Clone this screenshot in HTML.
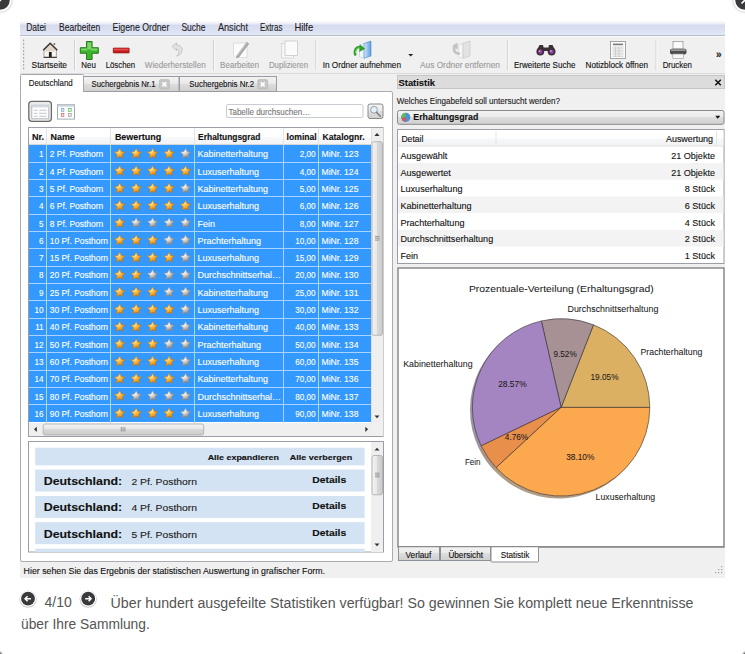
<!DOCTYPE html>
<html><head><meta charset="utf-8"><style>
html,body{margin:0;padding:0;background:#fff;width:745px;height:654px;overflow:hidden}
svg{display:block}
text{font-family:"Liberation Sans",sans-serif}
</style></head><body>
<svg width="745" height="654" viewBox="0 0 745 654" shape-rendering="auto">
<defs>
<linearGradient id="gMenu" x1="0" y1="0" x2="0" y2="1">
 <stop offset="0" stop-color="#fbfbfd"/><stop offset="0.14" stop-color="#f1f3f9"/><stop offset="0.3" stop-color="#d5dbee"/><stop offset="0.92" stop-color="#e1e6f5"/><stop offset="1" stop-color="#e1e6f5"/>
</linearGradient>
<linearGradient id="gTab" x1="0" y1="0" x2="0" y2="1">
 <stop offset="0" stop-color="#f3f3f3"/><stop offset="0.45" stop-color="#ebebeb"/><stop offset="0.5" stop-color="#dddddd"/><stop offset="1" stop-color="#cfcfcf"/>
</linearGradient>
<linearGradient id="gHdr" x1="0" y1="0" x2="0" y2="1">
 <stop offset="0" stop-color="#ffffff"/><stop offset="0.5" stop-color="#ffffff"/><stop offset="0.55" stop-color="#f7f8fa"/><stop offset="1" stop-color="#f1f2f4"/>
</linearGradient>
<linearGradient id="gBtn" x1="0" y1="0" x2="0" y2="1">
 <stop offset="0" stop-color="#f2f2f2"/><stop offset="0.5" stop-color="#ebebeb"/><stop offset="0.5" stop-color="#dddddd"/><stop offset="1" stop-color="#cfcfcf"/>
</linearGradient>
<linearGradient id="gThumbV" x1="0" y1="0" x2="1" y2="0">
 <stop offset="0" stop-color="#f3f3f3"/><stop offset="0.45" stop-color="#e8e8e8"/><stop offset="0.5" stop-color="#d9d9d9"/><stop offset="1" stop-color="#cbcbcb"/>
</linearGradient>
<linearGradient id="gThumbH" x1="0" y1="0" x2="0" y2="1">
 <stop offset="0" stop-color="#f3f3f3"/><stop offset="0.45" stop-color="#e8e8e8"/><stop offset="0.5" stop-color="#d9d9d9"/><stop offset="1" stop-color="#cbcbcb"/>
</linearGradient>
<linearGradient id="gGreen" x1="0" y1="0" x2="0" y2="1">
 <stop offset="0" stop-color="#9be07a"/><stop offset="0.5" stop-color="#3cae22"/><stop offset="1" stop-color="#1f7a12"/>
</linearGradient>
<radialGradient id="gStar" cx="0.35" cy="0.3" r="0.75">
 <stop offset="0" stop-color="#fff3c0"/><stop offset="0.35" stop-color="#fbc04a"/><stop offset="0.7" stop-color="#f59b12"/><stop offset="1" stop-color="#c8720c"/>
</radialGradient>
<radialGradient id="gStarG" cx="0.35" cy="0.3" r="0.75">
 <stop offset="0" stop-color="#ffffff"/><stop offset="0.35" stop-color="#dcdad8"/><stop offset="0.7" stop-color="#aaa39c"/><stop offset="1" stop-color="#857c74"/>
</radialGradient>
<linearGradient id="gBlue" x1="0" y1="0" x2="1" y2="0"><stop offset="0" stop-color="#d7e8f8"/><stop offset="1" stop-color="#5a9de2"/></linearGradient>
<filter id="blur1" x="-50%" y="-50%" width="200%" height="200%"><feGaussianBlur stdDeviation="1.2"/></filter>
<filter id="blur05" x="-50%" y="-50%" width="200%" height="200%"><feGaussianBlur stdDeviation="0.5"/></filter>
<symbol id="star" viewBox="-6 -6 12 12" overflow="visible"><path d="M0.00,-5.60 L1.62,-2.22 L5.33,-1.73 L2.62,0.85 L3.29,4.53 L0.00,2.75 L-3.29,4.53 L-2.62,0.85 L-5.33,-1.73 L-1.62,-2.22 Z" stroke-linejoin="round"/></symbol>
</defs>
<circle cx="0" cy="0" r="12.5" fill="#000" opacity="0.18" filter="url(#blur1)"/>
<circle cx="0" cy="0" r="11.5" fill="#fff"/>
<circle cx="0" cy="0" r="9.8" fill="#3a3a3c"/>
<path d="M-1,1.5 L1.5,-1" stroke="#fff" stroke-width="1.6"/>
<circle cx="745" cy="0" r="12.5" fill="#000" opacity="0.18" filter="url(#blur1)"/>
<circle cx="745" cy="0" r="11.5" fill="#fff"/>
<circle cx="745" cy="0" r="9.8" fill="#3a3a3c"/>
<path d="M741.5,3.5 L745,0" stroke="#fff" stroke-width="1.6"/>
<circle cx="-5" cy="659" r="8" fill="#000" filter="url(#blur1)"/>
<circle cx="750" cy="659" r="8" fill="#000" filter="url(#blur1)"/>
<rect x="20" y="21" width="705" height="557" fill="#f0f0f0" />
<rect x="20" y="21" width="705" height="14.5" fill="url(#gMenu)" />
<line x1="20" y1="35.5" x2="725" y2="35.5" stroke="#b9bdc9" stroke-width="1" />
<line x1="20" y1="36.5" x2="725" y2="36.5" stroke="#fbfbfb" stroke-width="1" />
<text x="26.2" y="30.9" font-family="Liberation Sans" font-size="10.4" fill="#1e1e1e" stroke="#1e1e1e" stroke-width="0.12" textLength="19.80" lengthAdjust="spacingAndGlyphs" >Datei</text>
<text x="59.1" y="30.9" font-family="Liberation Sans" font-size="10.4" fill="#1e1e1e" stroke="#1e1e1e" stroke-width="0.12" textLength="41.00" lengthAdjust="spacingAndGlyphs" >Bearbeiten</text>
<text x="112.6" y="30.9" font-family="Liberation Sans" font-size="10.4" fill="#1e1e1e" stroke="#1e1e1e" stroke-width="0.12" textLength="56.80" lengthAdjust="spacingAndGlyphs" >Eigene Ordner</text>
<text x="181.4" y="30.9" font-family="Liberation Sans" font-size="10.4" fill="#1e1e1e" stroke="#1e1e1e" stroke-width="0.12" textLength="24.00" lengthAdjust="spacingAndGlyphs" >Suche</text>
<text x="217.9" y="30.9" font-family="Liberation Sans" font-size="10.4" fill="#1e1e1e" stroke="#1e1e1e" stroke-width="0.12" textLength="30.10" lengthAdjust="spacingAndGlyphs" >Ansicht</text>
<text x="259.9" y="30.9" font-family="Liberation Sans" font-size="10.4" fill="#1e1e1e" stroke="#1e1e1e" stroke-width="0.12" textLength="22.50" lengthAdjust="spacingAndGlyphs" >Extras</text>
<text x="294.4" y="30.9" font-family="Liberation Sans" font-size="10.4" fill="#1e1e1e" stroke="#1e1e1e" stroke-width="0.12" textLength="18.80" lengthAdjust="spacingAndGlyphs" >Hilfe</text>
<line x1="20" y1="73.5" x2="725" y2="73.5" stroke="#dcdcdc" stroke-width="1" />
<rect x="23" y="39.5" width="1.2" height="1.8" fill="#a8a8a8" />
<rect x="23" y="43.0" width="1.2" height="1.8" fill="#a8a8a8" />
<rect x="23" y="46.5" width="1.2" height="1.8" fill="#a8a8a8" />
<rect x="23" y="50.0" width="1.2" height="1.8" fill="#a8a8a8" />
<rect x="23" y="53.5" width="1.2" height="1.8" fill="#a8a8a8" />
<rect x="23" y="57.0" width="1.2" height="1.8" fill="#a8a8a8" />
<rect x="23" y="60.5" width="1.2" height="1.8" fill="#a8a8a8" />
<rect x="23" y="64.0" width="1.2" height="1.8" fill="#a8a8a8" />
<rect x="23" y="67.5" width="1.2" height="1.8" fill="#a8a8a8" />
<line x1="74.5" y1="39.5" x2="74.5" y2="70.5" stroke="#d0d0d0" stroke-width="1" />
<line x1="75.5" y1="39.5" x2="75.5" y2="70.5" stroke="#fafafa" stroke-width="1" />
<line x1="213.5" y1="39.5" x2="213.5" y2="70.5" stroke="#d0d0d0" stroke-width="1" />
<line x1="214.5" y1="39.5" x2="214.5" y2="70.5" stroke="#fafafa" stroke-width="1" />
<line x1="315.9" y1="39.5" x2="315.9" y2="70.5" stroke="#d0d0d0" stroke-width="1" />
<line x1="316.9" y1="39.5" x2="316.9" y2="70.5" stroke="#fafafa" stroke-width="1" />
<line x1="507.7" y1="39.5" x2="507.7" y2="70.5" stroke="#d0d0d0" stroke-width="1" />
<line x1="508.7" y1="39.5" x2="508.7" y2="70.5" stroke="#fafafa" stroke-width="1" />
<line x1="656" y1="39.5" x2="656" y2="70.5" stroke="#d0d0d0" stroke-width="1" />
<line x1="657" y1="39.5" x2="657" y2="70.5" stroke="#fafafa" stroke-width="1" />
<text x="31.6" y="67.6" font-family="Liberation Sans" font-size="8.6" fill="#111" stroke="#111" stroke-width="0.12" textLength="35.40" lengthAdjust="spacingAndGlyphs" >Startseite</text>
<text x="81.3" y="67.6" font-family="Liberation Sans" font-size="8.6" fill="#111" stroke="#111" stroke-width="0.12" textLength="14.50" lengthAdjust="spacingAndGlyphs" >Neu</text>
<text x="105.7" y="67.6" font-family="Liberation Sans" font-size="8.6" fill="#111" stroke="#111" stroke-width="0.12" textLength="29.50" lengthAdjust="spacingAndGlyphs" >Löschen</text>
<text x="144.8" y="67.6" font-family="Liberation Sans" font-size="8.6" fill="#9a9a9a" stroke="#9a9a9a" stroke-width="0.12" textLength="60.90" lengthAdjust="spacingAndGlyphs" >Wiederherstellen</text>
<text x="220" y="67.6" font-family="Liberation Sans" font-size="8.6" fill="#9a9a9a" stroke="#9a9a9a" stroke-width="0.12" textLength="39.10" lengthAdjust="spacingAndGlyphs" >Bearbeiten</text>
<text x="268.9" y="67.6" font-family="Liberation Sans" font-size="8.6" fill="#9a9a9a" stroke="#9a9a9a" stroke-width="0.12" textLength="39.10" lengthAdjust="spacingAndGlyphs" >Duplizieren</text>
<text x="322.7" y="67.6" font-family="Liberation Sans" font-size="8.6" fill="#111" stroke="#111" stroke-width="0.12" textLength="78.30" lengthAdjust="spacingAndGlyphs" >In Ordner aufnehmen</text>
<text x="420" y="67.6" font-family="Liberation Sans" font-size="8.6" fill="#9a9a9a" stroke="#9a9a9a" stroke-width="0.12" textLength="80.00" lengthAdjust="spacingAndGlyphs" >Aus Ordner entfernen</text>
<text x="513.9" y="67.6" font-family="Liberation Sans" font-size="8.6" fill="#111" stroke="#111" stroke-width="0.12" textLength="61.70" lengthAdjust="spacingAndGlyphs" >Erweiterte Suche</text>
<text x="585.5" y="67.6" font-family="Liberation Sans" font-size="8.6" fill="#111" stroke="#111" stroke-width="0.12" textLength="62.50" lengthAdjust="spacingAndGlyphs" >Notizblock öffnen</text>
<text x="662.7" y="67.6" font-family="Liberation Sans" font-size="8.6" fill="#111" stroke="#111" stroke-width="0.12" textLength="29.30" lengthAdjust="spacingAndGlyphs" >Drucken</text>
<text x="716" y="58" font-family="Liberation Sans" font-size="10" fill="#222" stroke="#222" stroke-width="0.12" font-weight="bold" >»</text>
<g><path d="M44,49.3 L44,57.2 L56.4,57.2 L56.4,49.3 L50.2,44 Z" fill="#f8f6f2" stroke="#8c857c" stroke-width="0.7"/><path d="M45,49.2 L50.2,44.8 L55.4,49.2 L55.4,51.5 L45,51.5 Z" fill="#d8cdc0" opacity="0.8"/><path d="M43.2,50.3 L50.2,43.2 L57.3,50.3" fill="none" stroke="#3a3531" stroke-width="1.5" stroke-linejoin="miter"/><rect x="48.9" y="52" width="2.8" height="5.2" fill="#1f1f1f"/><line x1="43.6" y1="57.4" x2="56.8" y2="57.4" stroke="#3f3a35" stroke-width="1.1"/><rect x="53.6" y="43.2" width="1.6" height="1.8" fill="#6a6a6a"/></g>
<path d="M86.5,41.5 h5.6 v6.2 h6.2 v5.6 h-6.2 v6.2 h-5.6 v-6.2 h-6.2 v-5.6 h6.2 Z" fill="#3cb52a" stroke="#1d6e14" stroke-width="0.9" stroke-linejoin="round"/>
<path d="M87.3,42.4 h4 v6 h6.1 v2 h-6.1 v-1 h-4 Z M81.2,48.5 h6 v2 h-6 Z" fill="#8fe07a" opacity="0.75"/>
<rect x="113.2" y="48" width="16" height="5" rx="0.6" fill="#c41c1c" stroke="#8e1010" stroke-width="0.6"/>
<rect x="114" y="48.6" width="14.4" height="1.8" fill="#ee5b5b" opacity="0.8"/>
<path d="M172,46.5 L176.5,42.8 L176.5,45 C181,45 183,48 182,51.5 C181.2,54 179,55.5 176.5,56 C179,54.2 179.5,51.5 178,49.8 C177.3,49 176.8,48.9 176.5,48.9 L176.5,50.5 Z" fill="#e2e2e2" stroke="#b8b8b8" stroke-width="0.7"/>
<path d="M233.5,43 h13.5 v14.5 h-11 l-2.5,-2.5 Z" fill="#fbfbfb" stroke="#cfcfcf" stroke-width="0.6"/>
<path d="M237,55.5 L246.8,42.2 L248.8,43.8 L239,57 L236.4,57.8 Z" fill="#a8a8a8" stroke="#888" stroke-width="0.4"/>
<path d="M237.6,55.6 L247.2,42.8" stroke="#d8d8d8" stroke-width="0.5"/>
<rect x="281.5" y="43.5" width="12" height="14.5" fill="#f6f6f6" stroke="#cfcfcf" stroke-width="0.7"/>
<rect x="285" y="41" width="12.5" height="14.5" fill="#fbfbfb" stroke="#c4c4c4" stroke-width="0.7"/>
<path d="M359.5,45 L364,43.5 L364,58.2 L359.5,56.8 Z" fill="#f4f8fc" stroke="#a9c4de" stroke-width="0.5"/>
<path d="M364,43.5 L371,41 L371,56 L364,58.2 Z" fill="url(#gBlue)" stroke="#4b86c8" stroke-width="0.6"/>
<path d="M355.2,54.5 C354,49.5 357,46.2 361,47.2" fill="none" stroke="#2f9e2a" stroke-width="2.6" stroke-linecap="round"/>
<path d="M359.8,44.2 L365.2,48.8 L359.2,52 Z" fill="#2f9e2a"/>
<path d="M355.6,52.5 C355.2,49.8 356.8,48 359,47.8" fill="none" stroke="#8fdc7c" stroke-width="0.9" stroke-linecap="round"/>
<path d="M408.2,54 L413.2,54 L410.7,56.6 Z" fill="#222"/>
<path d="M458.5,45 L463,43.5 L463,58.2 L458.5,56.8 Z" fill="#f6f6f6" stroke="#d0d0d0" stroke-width="0.5"/>
<path d="M463,43.5 L470,41 L470,56 L463,58.2 Z" fill="#e2e2e2" stroke="#c2c2c2" stroke-width="0.6"/>
<path d="M455.5,45 C452.5,49 454,53.5 459,53.5" fill="none" stroke="#c4c4c4" stroke-width="2.6" stroke-linecap="round"/>
<path d="M452,46.5 L457.5,42.5 L457.8,49.5 Z" fill="#c4c4c4"/>
<g fill="#3a3036"><circle cx="540.3" cy="51.6" r="3.9"/><circle cx="551.6" cy="51.6" r="3.9"/><path d="M537,50 L539.5,45 L543,45 L544.2,50 Z"/><path d="M547.7,50 L549,45 L552.5,45 L555,50 Z"/><rect x="543" y="47.5" width="5.5" height="3.5"/></g>
<circle cx="540.3" cy="51.8" r="2.2" fill="#8e3aa0"/><circle cx="551.6" cy="51.8" r="2.2" fill="#8e3aa0"/>
<circle cx="539.6" cy="51.1" r="0.9" fill="#e0a6ee"/><circle cx="550.9" cy="51.1" r="0.9" fill="#e0a6ee"/>
<rect x="610.5" y="41.5" width="15" height="17" fill="#fbfbfb" stroke="#8f8f8f" stroke-width="0.8"/>
<rect x="613" y="43.6" width="10" height="1.6" fill="#7a7a7a"/>
<g stroke="#bdbdbd" stroke-width="0.55"><line x1="612.5" y1="47.20" x2="623.5" y2="47.20"/><line x1="612.5" y1="48.75" x2="623.5" y2="48.75"/><line x1="612.5" y1="50.30" x2="623.5" y2="50.30"/><line x1="612.5" y1="51.85" x2="623.5" y2="51.85"/><line x1="612.5" y1="53.40" x2="623.5" y2="53.40"/><line x1="612.5" y1="54.95" x2="623.5" y2="54.95"/><line x1="612.5" y1="56.50" x2="623.5" y2="56.50"/><line x1="615.5" y1="46.5" x2="615.5" y2="57"/><line x1="619" y1="46.5" x2="619" y2="57"/></g>
<rect x="673" y="41.5" width="10" height="7.5" fill="#fafafa" stroke="#8f8f8f" stroke-width="0.7"/>
<rect x="670" y="48.8" width="16.5" height="5.6" rx="1.8" fill="#4e4e4e"/>
<rect x="670.8" y="49.2" width="15" height="1.8" rx="0.8" fill="#9a9a9a"/>
<rect x="672.8" y="54" width="10.5" height="4.6" fill="#f6f6f6" stroke="#9a9a9a" stroke-width="0.6"/>
<rect x="20.5" y="91.5" width="372" height="470" fill="#ffffff" stroke="#a9acb2" stroke-width="1" rx="1.5" />
<rect x="83.5" y="76.5" width="95.5" height="15" fill="url(#gTab)" stroke="#9a9ea4" stroke-width="1" />
<rect x="179.5" y="76.5" width="97" height="15" fill="url(#gTab)" stroke="#9a9ea4" stroke-width="1" />
<rect x="20.5" y="74.5" width="63" height="17.5" fill="#ffffff" stroke="#a3a7ad" stroke-width="1" rx="1" />
<rect x="21" y="90" width="62" height="3" fill="#ffffff" />
<text x="28.7" y="86" font-family="Liberation Sans" font-size="9.2" fill="#111" stroke="#111" stroke-width="0.12" textLength="44.10" lengthAdjust="spacingAndGlyphs" >Deutschland</text>
<text x="91.5" y="87" font-family="Liberation Sans" font-size="9.2" fill="#111" stroke="#111" stroke-width="0.12" textLength="64.00" lengthAdjust="spacingAndGlyphs" >Suchergebnis Nr.1</text>
<text x="189.3" y="87" font-family="Liberation Sans" font-size="9.2" fill="#111" stroke="#111" stroke-width="0.12" textLength="64.90" lengthAdjust="spacingAndGlyphs" >Suchergebnis Nr.2</text>
<rect x="159.5" y="79.6" width="9.8" height="9.4" fill="#c6c6c6" stroke="#b3b3b3" stroke-width="0.6" rx="1.2" />
<path d="M162.4,82.4 L166.4,86.4 M166.4,82.4 L162.4,86.4" stroke="#fff" stroke-width="1.6"/>
<rect x="257.8" y="79.6" width="9.8" height="9.4" fill="#c6c6c6" stroke="#b3b3b3" stroke-width="0.6" rx="1.2" />
<path d="M260.7,82.4 L264.7,86.4 M264.7,82.4 L260.7,86.4" stroke="#fff" stroke-width="1.6"/>
<rect x="28.8" y="101.3" width="22.6" height="20" fill="#ececec" stroke="#6c6c6c" stroke-width="1.3" rx="3" />
<rect x="31.8" y="105.2" width="17" height="13.6" fill="#fdfdfd" stroke="#a3acb8" stroke-width="0.8" />
<rect x="31.8" y="105.2" width="17" height="2.2" fill="#d3d9e0" />
<g stroke="#bcc2ca" stroke-width="0.9"><line x1="34" y1="110.3" x2="37.4" y2="110.3"/><line x1="39.2" y1="110.3" x2="46.6" y2="110.3"/><line x1="34" y1="113.3" x2="37.4" y2="113.3"/><line x1="39.2" y1="113.3" x2="46.6" y2="113.3"/><line x1="34" y1="116.3" x2="37.4" y2="116.3"/><line x1="39.2" y1="116.3" x2="46.6" y2="116.3"/></g>
<rect x="57.5" y="104.5" width="17" height="14.6" fill="#fdfdfd" stroke="#9aa3ae" stroke-width="0.9" />
<rect x="57.5" y="104.5" width="17" height="2.2" fill="#ccd3db" />
<rect x="61.3" y="108.3" width="2.6" height="3.2" fill="#dfe9f6" stroke="#6e98cf" stroke-width="0.6"/><rect x="68.6" y="108.3" width="2.6" height="3.2" fill="#e2f3de" stroke="#4fae4f" stroke-width="0.6"/><rect x="61.3" y="113.3" width="2.6" height="3.2" fill="#f6e0e0" stroke="#d05a5a" stroke-width="0.6"/><rect x="68.6" y="113.3" width="2.6" height="3.2" fill="#eeeeee" stroke="#8a8a8a" stroke-width="0.6"/>
<rect x="226.5" y="104.5" width="136.5" height="13" fill="#ffffff" stroke="#c9ccd2" stroke-width="1" rx="1.5" />
<text x="228.4" y="114.6" font-family="Liberation Sans" font-size="9" fill="#777" stroke="#777" stroke-width="0.12" textLength="81.90" lengthAdjust="spacingAndGlyphs" >Tabelle durchsuchen…</text>
<rect x="368" y="104" width="15" height="14.5" fill="url(#gBtn)" stroke="#8a8a8a" stroke-width="1" rx="2" />
<circle cx="374" cy="109.8" r="3.4" fill="#e3f0fb" stroke="#8a9aaa" stroke-width="0.9"/><line x1="376.4" y1="112.3" x2="380.3" y2="116.2" stroke="#7d7d7d" stroke-width="1.4" stroke-linecap="round"/>
<rect x="28.5" y="127.5" width="354.5" height="309" fill="#ffffff" stroke="#9a9ea5" stroke-width="1" />
<rect x="29" y="128" width="342" height="17" fill="url(#gHdr)" />
<line x1="29" y1="144.5" x2="371" y2="144.5" stroke="#d5d5d5" stroke-width="1" />
<line x1="46.5" y1="128" x2="46.5" y2="144.5" stroke="#e3e3e3" stroke-width="1" />
<line x1="110.5" y1="128" x2="110.5" y2="144.5" stroke="#e3e3e3" stroke-width="1" />
<line x1="194.5" y1="128" x2="194.5" y2="144.5" stroke="#e3e3e3" stroke-width="1" />
<line x1="283.5" y1="128" x2="283.5" y2="144.5" stroke="#e3e3e3" stroke-width="1" />
<line x1="318.5" y1="128" x2="318.5" y2="144.5" stroke="#e3e3e3" stroke-width="1" />
<text x="32" y="139.9" font-family="Liberation Sans" font-size="9.2" fill="#111" stroke="#111" stroke-width="0.12" font-weight="bold" textLength="12.10" lengthAdjust="spacingAndGlyphs" >Nr.</text>
<text x="50.6" y="139.9" font-family="Liberation Sans" font-size="9.2" fill="#111" stroke="#111" stroke-width="0.12" font-weight="bold" textLength="24.20" lengthAdjust="spacingAndGlyphs" >Name</text>
<text x="114.9" y="139.9" font-family="Liberation Sans" font-size="9.2" fill="#111" stroke="#111" stroke-width="0.12" font-weight="bold" textLength="46.40" lengthAdjust="spacingAndGlyphs" >Bewertung</text>
<text x="198.1" y="139.9" font-family="Liberation Sans" font-size="9.2" fill="#111" stroke="#111" stroke-width="0.12" font-weight="bold" textLength="62.30" lengthAdjust="spacingAndGlyphs" >Erhaltungsgrad</text>
<text x="286.6" y="139.9" font-family="Liberation Sans" font-size="9.2" fill="#111" stroke="#111" stroke-width="0.12" font-weight="bold" textLength="30.10" lengthAdjust="spacingAndGlyphs" >lominal</text>
<text x="322.5" y="139.9" font-family="Liberation Sans" font-size="9.2" fill="#111" stroke="#111" stroke-width="0.12" font-weight="bold" textLength="42.10" lengthAdjust="spacingAndGlyphs" >Katalognr.</text>
<rect x="29" y="145" width="342" height="276.96" fill="#3399ff" />
<line x1="29" y1="162.5" x2="371" y2="162.5" stroke="#a8d3fd" stroke-width="1" />
<line x1="29" y1="179.5" x2="371" y2="179.5" stroke="#a8d3fd" stroke-width="1" />
<line x1="29" y1="196.5" x2="371" y2="196.5" stroke="#a8d3fd" stroke-width="1" />
<line x1="29" y1="214.5" x2="371" y2="214.5" stroke="#a8d3fd" stroke-width="1" />
<line x1="29" y1="231.5" x2="371" y2="231.5" stroke="#a8d3fd" stroke-width="1" />
<line x1="29" y1="248.5" x2="371" y2="248.5" stroke="#a8d3fd" stroke-width="1" />
<line x1="29" y1="266.5" x2="371" y2="266.5" stroke="#a8d3fd" stroke-width="1" />
<line x1="29" y1="283.5" x2="371" y2="283.5" stroke="#a8d3fd" stroke-width="1" />
<line x1="29" y1="300.5" x2="371" y2="300.5" stroke="#a8d3fd" stroke-width="1" />
<line x1="29" y1="318.5" x2="371" y2="318.5" stroke="#a8d3fd" stroke-width="1" />
<line x1="29" y1="335.5" x2="371" y2="335.5" stroke="#a8d3fd" stroke-width="1" />
<line x1="29" y1="352.5" x2="371" y2="352.5" stroke="#a8d3fd" stroke-width="1" />
<line x1="29" y1="370.5" x2="371" y2="370.5" stroke="#a8d3fd" stroke-width="1" />
<line x1="29" y1="387.5" x2="371" y2="387.5" stroke="#a8d3fd" stroke-width="1" />
<line x1="29" y1="404.5" x2="371" y2="404.5" stroke="#a8d3fd" stroke-width="1" />
<line x1="46.5" y1="145" x2="46.5" y2="423" stroke="#a8d3fd" stroke-width="1" />
<line x1="110.5" y1="145" x2="110.5" y2="423" stroke="#a8d3fd" stroke-width="1" />
<line x1="194.5" y1="145" x2="194.5" y2="423" stroke="#a8d3fd" stroke-width="1" />
<line x1="283.5" y1="145" x2="283.5" y2="423" stroke="#a8d3fd" stroke-width="1" />
<line x1="318.5" y1="145" x2="318.5" y2="423" stroke="#a8d3fd" stroke-width="1" />
<text x="43.6" y="157.3" font-family="Liberation Sans" font-size="9.5" fill="#fff" stroke="#fff" stroke-width="0.12" text-anchor="end" textLength="4.51" lengthAdjust="spacingAndGlyphs" >1</text>
<text x="49.7" y="157.3" font-family="Liberation Sans" font-size="9.5" fill="#fff" stroke="#fff" stroke-width="0.12" textLength="53.58" lengthAdjust="spacingAndGlyphs" >2 Pf. Posthorn</text>
<text x="197.6" y="157.3" font-family="Liberation Sans" font-size="9.5" fill="#fff" stroke="#fff" stroke-width="0.12" textLength="70.53" lengthAdjust="spacingAndGlyphs" >Kabinetterhaltung</text>
<text x="315.6" y="157.3" font-family="Liberation Sans" font-size="9.5" fill="#fff" stroke="#fff" stroke-width="0.12" text-anchor="end" textLength="15.77" lengthAdjust="spacingAndGlyphs" >2,00</text>
<text x="321.5" y="157.3" font-family="Liberation Sans" font-size="9.5" fill="#fff" stroke="#fff" stroke-width="0.12" textLength="36.95" lengthAdjust="spacingAndGlyphs" >MiNr. 123</text>
<use href="#star" x="113.70" y="147.75" width="12" height="12" fill="url(#gStar)" stroke="#b8741a" stroke-width="0.5"/>
<use href="#star" x="130.17" y="147.75" width="12" height="12" fill="url(#gStar)" stroke="#b8741a" stroke-width="0.5"/>
<use href="#star" x="146.64" y="147.75" width="12" height="12" fill="url(#gStar)" stroke="#b8741a" stroke-width="0.5"/>
<use href="#star" x="163.11" y="147.75" width="12" height="12" fill="url(#gStar)" stroke="#b8741a" stroke-width="0.5"/>
<use href="#star" x="179.58" y="147.75" width="12" height="12" fill="url(#gStarG)" stroke="#8a8a8a" stroke-width="0.5"/>
<text x="43.6" y="174.61" font-family="Liberation Sans" font-size="9.5" fill="#fff" stroke="#fff" stroke-width="0.12" text-anchor="end" textLength="4.51" lengthAdjust="spacingAndGlyphs" >2</text>
<text x="49.7" y="174.61" font-family="Liberation Sans" font-size="9.5" fill="#fff" stroke="#fff" stroke-width="0.12" textLength="53.58" lengthAdjust="spacingAndGlyphs" >4 Pf. Posthorn</text>
<text x="197.6" y="174.61" font-family="Liberation Sans" font-size="9.5" fill="#fff" stroke="#fff" stroke-width="0.12" textLength="61.52" lengthAdjust="spacingAndGlyphs" >Luxuserhaltung</text>
<text x="315.6" y="174.61" font-family="Liberation Sans" font-size="9.5" fill="#fff" stroke="#fff" stroke-width="0.12" text-anchor="end" textLength="15.77" lengthAdjust="spacingAndGlyphs" >4,00</text>
<text x="321.5" y="174.61" font-family="Liberation Sans" font-size="9.5" fill="#fff" stroke="#fff" stroke-width="0.12" textLength="36.95" lengthAdjust="spacingAndGlyphs" >MiNr. 124</text>
<use href="#star" x="113.70" y="165.06" width="12" height="12" fill="url(#gStar)" stroke="#b8741a" stroke-width="0.5"/>
<use href="#star" x="130.17" y="165.06" width="12" height="12" fill="url(#gStar)" stroke="#b8741a" stroke-width="0.5"/>
<use href="#star" x="146.64" y="165.06" width="12" height="12" fill="url(#gStar)" stroke="#b8741a" stroke-width="0.5"/>
<use href="#star" x="163.11" y="165.06" width="12" height="12" fill="url(#gStar)" stroke="#b8741a" stroke-width="0.5"/>
<use href="#star" x="179.58" y="165.06" width="12" height="12" fill="url(#gStar)" stroke="#b8741a" stroke-width="0.5"/>
<text x="43.6" y="191.92000000000002" font-family="Liberation Sans" font-size="9.5" fill="#fff" stroke="#fff" stroke-width="0.12" text-anchor="end" textLength="4.51" lengthAdjust="spacingAndGlyphs" >3</text>
<text x="49.7" y="191.92000000000002" font-family="Liberation Sans" font-size="9.5" fill="#fff" stroke="#fff" stroke-width="0.12" textLength="53.58" lengthAdjust="spacingAndGlyphs" >5 Pf. Posthorn</text>
<text x="197.6" y="191.92000000000002" font-family="Liberation Sans" font-size="9.5" fill="#fff" stroke="#fff" stroke-width="0.12" textLength="70.53" lengthAdjust="spacingAndGlyphs" >Kabinetterhaltung</text>
<text x="315.6" y="191.92000000000002" font-family="Liberation Sans" font-size="9.5" fill="#fff" stroke="#fff" stroke-width="0.12" text-anchor="end" textLength="15.77" lengthAdjust="spacingAndGlyphs" >5,00</text>
<text x="321.5" y="191.92000000000002" font-family="Liberation Sans" font-size="9.5" fill="#fff" stroke="#fff" stroke-width="0.12" textLength="36.95" lengthAdjust="spacingAndGlyphs" >MiNr. 125</text>
<use href="#star" x="113.70" y="182.38" width="12" height="12" fill="url(#gStar)" stroke="#b8741a" stroke-width="0.5"/>
<use href="#star" x="130.17" y="182.38" width="12" height="12" fill="url(#gStar)" stroke="#b8741a" stroke-width="0.5"/>
<use href="#star" x="146.64" y="182.38" width="12" height="12" fill="url(#gStar)" stroke="#b8741a" stroke-width="0.5"/>
<use href="#star" x="163.11" y="182.38" width="12" height="12" fill="url(#gStar)" stroke="#b8741a" stroke-width="0.5"/>
<use href="#star" x="179.58" y="182.38" width="12" height="12" fill="url(#gStarG)" stroke="#8a8a8a" stroke-width="0.5"/>
<text x="43.6" y="209.23000000000002" font-family="Liberation Sans" font-size="9.5" fill="#fff" stroke="#fff" stroke-width="0.12" text-anchor="end" textLength="4.51" lengthAdjust="spacingAndGlyphs" >4</text>
<text x="49.7" y="209.23000000000002" font-family="Liberation Sans" font-size="9.5" fill="#fff" stroke="#fff" stroke-width="0.12" textLength="53.58" lengthAdjust="spacingAndGlyphs" >6 Pf. Posthorn</text>
<text x="197.6" y="209.23000000000002" font-family="Liberation Sans" font-size="9.5" fill="#fff" stroke="#fff" stroke-width="0.12" textLength="61.52" lengthAdjust="spacingAndGlyphs" >Luxuserhaltung</text>
<text x="315.6" y="209.23000000000002" font-family="Liberation Sans" font-size="9.5" fill="#fff" stroke="#fff" stroke-width="0.12" text-anchor="end" textLength="15.77" lengthAdjust="spacingAndGlyphs" >6,00</text>
<text x="321.5" y="209.23000000000002" font-family="Liberation Sans" font-size="9.5" fill="#fff" stroke="#fff" stroke-width="0.12" textLength="36.95" lengthAdjust="spacingAndGlyphs" >MiNr. 126</text>
<use href="#star" x="113.70" y="199.69" width="12" height="12" fill="url(#gStar)" stroke="#b8741a" stroke-width="0.5"/>
<use href="#star" x="130.17" y="199.69" width="12" height="12" fill="url(#gStar)" stroke="#b8741a" stroke-width="0.5"/>
<use href="#star" x="146.64" y="199.69" width="12" height="12" fill="url(#gStar)" stroke="#b8741a" stroke-width="0.5"/>
<use href="#star" x="163.11" y="199.69" width="12" height="12" fill="url(#gStar)" stroke="#b8741a" stroke-width="0.5"/>
<use href="#star" x="179.58" y="199.69" width="12" height="12" fill="url(#gStar)" stroke="#b8741a" stroke-width="0.5"/>
<text x="43.6" y="226.54000000000002" font-family="Liberation Sans" font-size="9.5" fill="#fff" stroke="#fff" stroke-width="0.12" text-anchor="end" textLength="4.51" lengthAdjust="spacingAndGlyphs" >5</text>
<text x="49.7" y="226.54000000000002" font-family="Liberation Sans" font-size="9.5" fill="#fff" stroke="#fff" stroke-width="0.12" textLength="53.58" lengthAdjust="spacingAndGlyphs" >8 Pf. Posthorn</text>
<text x="197.6" y="226.54000000000002" font-family="Liberation Sans" font-size="9.5" fill="#fff" stroke="#fff" stroke-width="0.12" textLength="17.50" lengthAdjust="spacingAndGlyphs" >Fein</text>
<text x="315.6" y="226.54000000000002" font-family="Liberation Sans" font-size="9.5" fill="#fff" stroke="#fff" stroke-width="0.12" text-anchor="end" textLength="15.77" lengthAdjust="spacingAndGlyphs" >8,00</text>
<text x="321.5" y="226.54000000000002" font-family="Liberation Sans" font-size="9.5" fill="#fff" stroke="#fff" stroke-width="0.12" textLength="36.95" lengthAdjust="spacingAndGlyphs" >MiNr. 127</text>
<use href="#star" x="113.70" y="217.00" width="12" height="12" fill="url(#gStar)" stroke="#b8741a" stroke-width="0.5"/>
<use href="#star" x="130.17" y="217.00" width="12" height="12" fill="url(#gStarG)" stroke="#8a8a8a" stroke-width="0.5"/>
<use href="#star" x="146.64" y="217.00" width="12" height="12" fill="url(#gStarG)" stroke="#8a8a8a" stroke-width="0.5"/>
<use href="#star" x="163.11" y="217.00" width="12" height="12" fill="url(#gStarG)" stroke="#8a8a8a" stroke-width="0.5"/>
<use href="#star" x="179.58" y="217.00" width="12" height="12" fill="url(#gStarG)" stroke="#8a8a8a" stroke-width="0.5"/>
<text x="43.6" y="243.85000000000002" font-family="Liberation Sans" font-size="9.5" fill="#fff" stroke="#fff" stroke-width="0.12" text-anchor="end" textLength="4.51" lengthAdjust="spacingAndGlyphs" >6</text>
<text x="49.7" y="243.85000000000002" font-family="Liberation Sans" font-size="9.5" fill="#fff" stroke="#fff" stroke-width="0.12" textLength="58.28" lengthAdjust="spacingAndGlyphs" >10 Pf. Posthorn</text>
<text x="197.6" y="243.85000000000002" font-family="Liberation Sans" font-size="9.5" fill="#fff" stroke="#fff" stroke-width="0.12" textLength="63.52" lengthAdjust="spacingAndGlyphs" >Prachterhaltung</text>
<text x="315.6" y="243.85000000000002" font-family="Liberation Sans" font-size="9.5" fill="#fff" stroke="#fff" stroke-width="0.12" text-anchor="end" textLength="20.28" lengthAdjust="spacingAndGlyphs" >10,00</text>
<text x="321.5" y="243.85000000000002" font-family="Liberation Sans" font-size="9.5" fill="#fff" stroke="#fff" stroke-width="0.12" textLength="36.95" lengthAdjust="spacingAndGlyphs" >MiNr. 128</text>
<use href="#star" x="113.70" y="234.31" width="12" height="12" fill="url(#gStar)" stroke="#b8741a" stroke-width="0.5"/>
<use href="#star" x="130.17" y="234.31" width="12" height="12" fill="url(#gStar)" stroke="#b8741a" stroke-width="0.5"/>
<use href="#star" x="146.64" y="234.31" width="12" height="12" fill="url(#gStar)" stroke="#b8741a" stroke-width="0.5"/>
<use href="#star" x="163.11" y="234.31" width="12" height="12" fill="url(#gStarG)" stroke="#8a8a8a" stroke-width="0.5"/>
<use href="#star" x="179.58" y="234.31" width="12" height="12" fill="url(#gStarG)" stroke="#8a8a8a" stroke-width="0.5"/>
<text x="43.6" y="261.15999999999997" font-family="Liberation Sans" font-size="9.5" fill="#fff" stroke="#fff" stroke-width="0.12" text-anchor="end" textLength="4.51" lengthAdjust="spacingAndGlyphs" >7</text>
<text x="49.7" y="261.15999999999997" font-family="Liberation Sans" font-size="9.5" fill="#fff" stroke="#fff" stroke-width="0.12" textLength="58.28" lengthAdjust="spacingAndGlyphs" >15 Pf. Posthorn</text>
<text x="197.6" y="261.15999999999997" font-family="Liberation Sans" font-size="9.5" fill="#fff" stroke="#fff" stroke-width="0.12" textLength="61.52" lengthAdjust="spacingAndGlyphs" >Luxuserhaltung</text>
<text x="315.6" y="261.15999999999997" font-family="Liberation Sans" font-size="9.5" fill="#fff" stroke="#fff" stroke-width="0.12" text-anchor="end" textLength="20.28" lengthAdjust="spacingAndGlyphs" >15,00</text>
<text x="321.5" y="261.15999999999997" font-family="Liberation Sans" font-size="9.5" fill="#fff" stroke="#fff" stroke-width="0.12" textLength="36.95" lengthAdjust="spacingAndGlyphs" >MiNr. 129</text>
<use href="#star" x="113.70" y="251.61" width="12" height="12" fill="url(#gStar)" stroke="#b8741a" stroke-width="0.5"/>
<use href="#star" x="130.17" y="251.61" width="12" height="12" fill="url(#gStar)" stroke="#b8741a" stroke-width="0.5"/>
<use href="#star" x="146.64" y="251.61" width="12" height="12" fill="url(#gStar)" stroke="#b8741a" stroke-width="0.5"/>
<use href="#star" x="163.11" y="251.61" width="12" height="12" fill="url(#gStar)" stroke="#b8741a" stroke-width="0.5"/>
<use href="#star" x="179.58" y="251.61" width="12" height="12" fill="url(#gStarG)" stroke="#8a8a8a" stroke-width="0.5"/>
<text x="43.6" y="278.46999999999997" font-family="Liberation Sans" font-size="9.5" fill="#fff" stroke="#fff" stroke-width="0.12" text-anchor="end" textLength="4.51" lengthAdjust="spacingAndGlyphs" >8</text>
<text x="49.7" y="278.46999999999997" font-family="Liberation Sans" font-size="9.5" fill="#fff" stroke="#fff" stroke-width="0.12" textLength="58.28" lengthAdjust="spacingAndGlyphs" >20 Pf. Posthorn</text>
<text x="197.6" y="278.46999999999997" font-family="Liberation Sans" font-size="9.5" fill="#fff" stroke="#fff" stroke-width="0.12" textLength="83.50" lengthAdjust="spacingAndGlyphs" >Durchschnittserhal…</text>
<text x="315.6" y="278.46999999999997" font-family="Liberation Sans" font-size="9.5" fill="#fff" stroke="#fff" stroke-width="0.12" text-anchor="end" textLength="20.28" lengthAdjust="spacingAndGlyphs" >20,00</text>
<text x="321.5" y="278.46999999999997" font-family="Liberation Sans" font-size="9.5" fill="#fff" stroke="#fff" stroke-width="0.12" textLength="36.95" lengthAdjust="spacingAndGlyphs" >MiNr. 130</text>
<use href="#star" x="113.70" y="268.92" width="12" height="12" fill="url(#gStar)" stroke="#b8741a" stroke-width="0.5"/>
<use href="#star" x="130.17" y="268.92" width="12" height="12" fill="url(#gStar)" stroke="#b8741a" stroke-width="0.5"/>
<use href="#star" x="146.64" y="268.92" width="12" height="12" fill="url(#gStarG)" stroke="#8a8a8a" stroke-width="0.5"/>
<use href="#star" x="163.11" y="268.92" width="12" height="12" fill="url(#gStarG)" stroke="#8a8a8a" stroke-width="0.5"/>
<use href="#star" x="179.58" y="268.92" width="12" height="12" fill="url(#gStarG)" stroke="#8a8a8a" stroke-width="0.5"/>
<text x="43.6" y="295.78000000000003" font-family="Liberation Sans" font-size="9.5" fill="#fff" stroke="#fff" stroke-width="0.12" text-anchor="end" textLength="4.51" lengthAdjust="spacingAndGlyphs" >9</text>
<text x="49.7" y="295.78000000000003" font-family="Liberation Sans" font-size="9.5" fill="#fff" stroke="#fff" stroke-width="0.12" textLength="58.28" lengthAdjust="spacingAndGlyphs" >25 Pf. Posthorn</text>
<text x="197.6" y="295.78000000000003" font-family="Liberation Sans" font-size="9.5" fill="#fff" stroke="#fff" stroke-width="0.12" textLength="70.53" lengthAdjust="spacingAndGlyphs" >Kabinetterhaltung</text>
<text x="315.6" y="295.78000000000003" font-family="Liberation Sans" font-size="9.5" fill="#fff" stroke="#fff" stroke-width="0.12" text-anchor="end" textLength="20.28" lengthAdjust="spacingAndGlyphs" >25,00</text>
<text x="321.5" y="295.78000000000003" font-family="Liberation Sans" font-size="9.5" fill="#fff" stroke="#fff" stroke-width="0.12" textLength="36.95" lengthAdjust="spacingAndGlyphs" >MiNr. 131</text>
<use href="#star" x="113.70" y="286.24" width="12" height="12" fill="url(#gStar)" stroke="#b8741a" stroke-width="0.5"/>
<use href="#star" x="130.17" y="286.24" width="12" height="12" fill="url(#gStar)" stroke="#b8741a" stroke-width="0.5"/>
<use href="#star" x="146.64" y="286.24" width="12" height="12" fill="url(#gStar)" stroke="#b8741a" stroke-width="0.5"/>
<use href="#star" x="163.11" y="286.24" width="12" height="12" fill="url(#gStarG)" stroke="#8a8a8a" stroke-width="0.5"/>
<use href="#star" x="179.58" y="286.24" width="12" height="12" fill="url(#gStarG)" stroke="#8a8a8a" stroke-width="0.5"/>
<text x="43.6" y="313.09" font-family="Liberation Sans" font-size="9.5" fill="#fff" stroke="#fff" stroke-width="0.12" text-anchor="end" textLength="9.01" lengthAdjust="spacingAndGlyphs" >10</text>
<text x="49.7" y="313.09" font-family="Liberation Sans" font-size="9.5" fill="#fff" stroke="#fff" stroke-width="0.12" textLength="58.28" lengthAdjust="spacingAndGlyphs" >30 Pf. Posthorn</text>
<text x="197.6" y="313.09" font-family="Liberation Sans" font-size="9.5" fill="#fff" stroke="#fff" stroke-width="0.12" textLength="61.52" lengthAdjust="spacingAndGlyphs" >Luxuserhaltung</text>
<text x="315.6" y="313.09" font-family="Liberation Sans" font-size="9.5" fill="#fff" stroke="#fff" stroke-width="0.12" text-anchor="end" textLength="20.28" lengthAdjust="spacingAndGlyphs" >30,00</text>
<text x="321.5" y="313.09" font-family="Liberation Sans" font-size="9.5" fill="#fff" stroke="#fff" stroke-width="0.12" textLength="36.95" lengthAdjust="spacingAndGlyphs" >MiNr. 132</text>
<use href="#star" x="113.70" y="303.54" width="12" height="12" fill="url(#gStar)" stroke="#b8741a" stroke-width="0.5"/>
<use href="#star" x="130.17" y="303.54" width="12" height="12" fill="url(#gStar)" stroke="#b8741a" stroke-width="0.5"/>
<use href="#star" x="146.64" y="303.54" width="12" height="12" fill="url(#gStar)" stroke="#b8741a" stroke-width="0.5"/>
<use href="#star" x="163.11" y="303.54" width="12" height="12" fill="url(#gStar)" stroke="#b8741a" stroke-width="0.5"/>
<use href="#star" x="179.58" y="303.54" width="12" height="12" fill="url(#gStarG)" stroke="#8a8a8a" stroke-width="0.5"/>
<text x="43.6" y="330.40000000000003" font-family="Liberation Sans" font-size="9.5" fill="#fff" stroke="#fff" stroke-width="0.12" text-anchor="end" textLength="8.41" lengthAdjust="spacingAndGlyphs" >11</text>
<text x="49.7" y="330.40000000000003" font-family="Liberation Sans" font-size="9.5" fill="#fff" stroke="#fff" stroke-width="0.12" textLength="58.28" lengthAdjust="spacingAndGlyphs" >40 Pf. Posthorn</text>
<text x="197.6" y="330.40000000000003" font-family="Liberation Sans" font-size="9.5" fill="#fff" stroke="#fff" stroke-width="0.12" textLength="70.53" lengthAdjust="spacingAndGlyphs" >Kabinetterhaltung</text>
<text x="315.6" y="330.40000000000003" font-family="Liberation Sans" font-size="9.5" fill="#fff" stroke="#fff" stroke-width="0.12" text-anchor="end" textLength="20.28" lengthAdjust="spacingAndGlyphs" >40,00</text>
<text x="321.5" y="330.40000000000003" font-family="Liberation Sans" font-size="9.5" fill="#fff" stroke="#fff" stroke-width="0.12" textLength="36.95" lengthAdjust="spacingAndGlyphs" >MiNr. 133</text>
<use href="#star" x="113.70" y="320.86" width="12" height="12" fill="url(#gStar)" stroke="#b8741a" stroke-width="0.5"/>
<use href="#star" x="130.17" y="320.86" width="12" height="12" fill="url(#gStar)" stroke="#b8741a" stroke-width="0.5"/>
<use href="#star" x="146.64" y="320.86" width="12" height="12" fill="url(#gStar)" stroke="#b8741a" stroke-width="0.5"/>
<use href="#star" x="163.11" y="320.86" width="12" height="12" fill="url(#gStarG)" stroke="#8a8a8a" stroke-width="0.5"/>
<use href="#star" x="179.58" y="320.86" width="12" height="12" fill="url(#gStarG)" stroke="#8a8a8a" stroke-width="0.5"/>
<text x="43.6" y="347.71" font-family="Liberation Sans" font-size="9.5" fill="#fff" stroke="#fff" stroke-width="0.12" text-anchor="end" textLength="9.01" lengthAdjust="spacingAndGlyphs" >12</text>
<text x="49.7" y="347.71" font-family="Liberation Sans" font-size="9.5" fill="#fff" stroke="#fff" stroke-width="0.12" textLength="58.28" lengthAdjust="spacingAndGlyphs" >50 Pf. Posthorn</text>
<text x="197.6" y="347.71" font-family="Liberation Sans" font-size="9.5" fill="#fff" stroke="#fff" stroke-width="0.12" textLength="63.52" lengthAdjust="spacingAndGlyphs" >Prachterhaltung</text>
<text x="315.6" y="347.71" font-family="Liberation Sans" font-size="9.5" fill="#fff" stroke="#fff" stroke-width="0.12" text-anchor="end" textLength="20.28" lengthAdjust="spacingAndGlyphs" >50,00</text>
<text x="321.5" y="347.71" font-family="Liberation Sans" font-size="9.5" fill="#fff" stroke="#fff" stroke-width="0.12" textLength="36.95" lengthAdjust="spacingAndGlyphs" >MiNr. 134</text>
<use href="#star" x="113.70" y="338.16" width="12" height="12" fill="url(#gStar)" stroke="#b8741a" stroke-width="0.5"/>
<use href="#star" x="130.17" y="338.16" width="12" height="12" fill="url(#gStar)" stroke="#b8741a" stroke-width="0.5"/>
<use href="#star" x="146.64" y="338.16" width="12" height="12" fill="url(#gStar)" stroke="#b8741a" stroke-width="0.5"/>
<use href="#star" x="163.11" y="338.16" width="12" height="12" fill="url(#gStarG)" stroke="#8a8a8a" stroke-width="0.5"/>
<use href="#star" x="179.58" y="338.16" width="12" height="12" fill="url(#gStarG)" stroke="#8a8a8a" stroke-width="0.5"/>
<text x="43.6" y="365.02" font-family="Liberation Sans" font-size="9.5" fill="#fff" stroke="#fff" stroke-width="0.12" text-anchor="end" textLength="9.01" lengthAdjust="spacingAndGlyphs" >13</text>
<text x="49.7" y="365.02" font-family="Liberation Sans" font-size="9.5" fill="#fff" stroke="#fff" stroke-width="0.12" textLength="58.28" lengthAdjust="spacingAndGlyphs" >60 Pf. Posthorn</text>
<text x="197.6" y="365.02" font-family="Liberation Sans" font-size="9.5" fill="#fff" stroke="#fff" stroke-width="0.12" textLength="61.52" lengthAdjust="spacingAndGlyphs" >Luxuserhaltung</text>
<text x="315.6" y="365.02" font-family="Liberation Sans" font-size="9.5" fill="#fff" stroke="#fff" stroke-width="0.12" text-anchor="end" textLength="20.28" lengthAdjust="spacingAndGlyphs" >60,00</text>
<text x="321.5" y="365.02" font-family="Liberation Sans" font-size="9.5" fill="#fff" stroke="#fff" stroke-width="0.12" textLength="36.95" lengthAdjust="spacingAndGlyphs" >MiNr. 135</text>
<use href="#star" x="113.70" y="355.47" width="12" height="12" fill="url(#gStar)" stroke="#b8741a" stroke-width="0.5"/>
<use href="#star" x="130.17" y="355.47" width="12" height="12" fill="url(#gStar)" stroke="#b8741a" stroke-width="0.5"/>
<use href="#star" x="146.64" y="355.47" width="12" height="12" fill="url(#gStar)" stroke="#b8741a" stroke-width="0.5"/>
<use href="#star" x="163.11" y="355.47" width="12" height="12" fill="url(#gStar)" stroke="#b8741a" stroke-width="0.5"/>
<use href="#star" x="179.58" y="355.47" width="12" height="12" fill="url(#gStarG)" stroke="#8a8a8a" stroke-width="0.5"/>
<text x="43.6" y="382.33" font-family="Liberation Sans" font-size="9.5" fill="#fff" stroke="#fff" stroke-width="0.12" text-anchor="end" textLength="9.01" lengthAdjust="spacingAndGlyphs" >14</text>
<text x="49.7" y="382.33" font-family="Liberation Sans" font-size="9.5" fill="#fff" stroke="#fff" stroke-width="0.12" textLength="58.28" lengthAdjust="spacingAndGlyphs" >70 Pf. Posthorn</text>
<text x="197.6" y="382.33" font-family="Liberation Sans" font-size="9.5" fill="#fff" stroke="#fff" stroke-width="0.12" textLength="70.53" lengthAdjust="spacingAndGlyphs" >Kabinetterhaltung</text>
<text x="315.6" y="382.33" font-family="Liberation Sans" font-size="9.5" fill="#fff" stroke="#fff" stroke-width="0.12" text-anchor="end" textLength="20.28" lengthAdjust="spacingAndGlyphs" >70,00</text>
<text x="321.5" y="382.33" font-family="Liberation Sans" font-size="9.5" fill="#fff" stroke="#fff" stroke-width="0.12" textLength="36.95" lengthAdjust="spacingAndGlyphs" >MiNr. 136</text>
<use href="#star" x="113.70" y="372.78" width="12" height="12" fill="url(#gStar)" stroke="#b8741a" stroke-width="0.5"/>
<use href="#star" x="130.17" y="372.78" width="12" height="12" fill="url(#gStar)" stroke="#b8741a" stroke-width="0.5"/>
<use href="#star" x="146.64" y="372.78" width="12" height="12" fill="url(#gStar)" stroke="#b8741a" stroke-width="0.5"/>
<use href="#star" x="163.11" y="372.78" width="12" height="12" fill="url(#gStar)" stroke="#b8741a" stroke-width="0.5"/>
<use href="#star" x="179.58" y="372.78" width="12" height="12" fill="url(#gStarG)" stroke="#8a8a8a" stroke-width="0.5"/>
<text x="43.6" y="399.64" font-family="Liberation Sans" font-size="9.5" fill="#fff" stroke="#fff" stroke-width="0.12" text-anchor="end" textLength="9.01" lengthAdjust="spacingAndGlyphs" >15</text>
<text x="49.7" y="399.64" font-family="Liberation Sans" font-size="9.5" fill="#fff" stroke="#fff" stroke-width="0.12" textLength="58.28" lengthAdjust="spacingAndGlyphs" >80 Pf. Posthorn</text>
<text x="197.6" y="399.64" font-family="Liberation Sans" font-size="9.5" fill="#fff" stroke="#fff" stroke-width="0.12" textLength="83.50" lengthAdjust="spacingAndGlyphs" >Durchschnittserhal…</text>
<text x="315.6" y="399.64" font-family="Liberation Sans" font-size="9.5" fill="#fff" stroke="#fff" stroke-width="0.12" text-anchor="end" textLength="20.28" lengthAdjust="spacingAndGlyphs" >80,00</text>
<text x="321.5" y="399.64" font-family="Liberation Sans" font-size="9.5" fill="#fff" stroke="#fff" stroke-width="0.12" textLength="36.95" lengthAdjust="spacingAndGlyphs" >MiNr. 137</text>
<use href="#star" x="113.70" y="390.09" width="12" height="12" fill="url(#gStar)" stroke="#b8741a" stroke-width="0.5"/>
<use href="#star" x="130.17" y="390.09" width="12" height="12" fill="url(#gStarG)" stroke="#8a8a8a" stroke-width="0.5"/>
<use href="#star" x="146.64" y="390.09" width="12" height="12" fill="url(#gStarG)" stroke="#8a8a8a" stroke-width="0.5"/>
<use href="#star" x="163.11" y="390.09" width="12" height="12" fill="url(#gStarG)" stroke="#8a8a8a" stroke-width="0.5"/>
<use href="#star" x="179.58" y="390.09" width="12" height="12" fill="url(#gStarG)" stroke="#8a8a8a" stroke-width="0.5"/>
<text x="43.6" y="416.95" font-family="Liberation Sans" font-size="9.5" fill="#fff" stroke="#fff" stroke-width="0.12" text-anchor="end" textLength="9.01" lengthAdjust="spacingAndGlyphs" >16</text>
<text x="49.7" y="416.95" font-family="Liberation Sans" font-size="9.5" fill="#fff" stroke="#fff" stroke-width="0.12" textLength="58.28" lengthAdjust="spacingAndGlyphs" >90 Pf. Posthorn</text>
<text x="197.6" y="416.95" font-family="Liberation Sans" font-size="9.5" fill="#fff" stroke="#fff" stroke-width="0.12" textLength="61.52" lengthAdjust="spacingAndGlyphs" >Luxuserhaltung</text>
<text x="315.6" y="416.95" font-family="Liberation Sans" font-size="9.5" fill="#fff" stroke="#fff" stroke-width="0.12" text-anchor="end" textLength="20.28" lengthAdjust="spacingAndGlyphs" >90,00</text>
<text x="321.5" y="416.95" font-family="Liberation Sans" font-size="9.5" fill="#fff" stroke="#fff" stroke-width="0.12" textLength="36.95" lengthAdjust="spacingAndGlyphs" >MiNr. 138</text>
<use href="#star" x="113.70" y="407.40" width="12" height="12" fill="url(#gStar)" stroke="#b8741a" stroke-width="0.5"/>
<use href="#star" x="130.17" y="407.40" width="12" height="12" fill="url(#gStar)" stroke="#b8741a" stroke-width="0.5"/>
<use href="#star" x="146.64" y="407.40" width="12" height="12" fill="url(#gStar)" stroke="#b8741a" stroke-width="0.5"/>
<use href="#star" x="163.11" y="407.40" width="12" height="12" fill="url(#gStar)" stroke="#b8741a" stroke-width="0.5"/>
<use href="#star" x="179.58" y="407.40" width="12" height="12" fill="url(#gStarG)" stroke="#8a8a8a" stroke-width="0.5"/>
<rect x="371" y="128" width="12" height="295" fill="#efefef" />
<line x1="371.5" y1="128" x2="371.5" y2="423" stroke="#e0e0e0" stroke-width="1" />
<path d="M374.4,135.9 L377,133.1 L379.6,135.9 Z" fill="#333"/>
<rect x="372" y="141.7" width="10.5" height="193.6" fill="url(#gThumbV)" stroke="#a9a9a9" stroke-width="0.8" rx="2" />
<g stroke="#777" stroke-width="0.7"><line x1="375" y1="236.5" x2="379.5" y2="236.5"/><line x1="375" y1="238.3" x2="379.5" y2="238.3"/><line x1="375" y1="240.1" x2="379.5" y2="240.1"/></g>
<path d="M374.5,415.5 L379.5,415.5 L377,418.2 Z" fill="#333"/>
<rect x="29" y="423" width="342" height="13" fill="#efefef" />
<rect x="371" y="423" width="12" height="13" fill="#f0f0f0" />
<path d="M36.8,426.7 L34,429.3 L36.8,431.9 Z" fill="#333"/>
<rect x="43.2" y="424" width="160.5" height="11" fill="url(#gThumbH)" stroke="#a9a9a9" stroke-width="0.8" rx="2" />
<g stroke="#777" stroke-width="0.7"><line x1="121.3" y1="427" x2="121.3" y2="431.5"/><line x1="123.1" y1="427" x2="123.1" y2="431.5"/><line x1="124.9" y1="427" x2="124.9" y2="431.5"/></g>
<path d="M365.3,426.7 L368.1,429.3 L365.3,431.9 Z" fill="#333"/>
<rect x="28.5" y="441.5" width="355" height="110.5" fill="#ffffff" stroke="#9a9ea5" stroke-width="1" />
<rect x="35.2" y="447.7" width="329.4" height="17.7" fill="#d4e3f3" />
<text x="207.7" y="459.9" font-family="Liberation Sans" font-size="7.4" fill="#111" stroke="#111" stroke-width="0.12" font-weight="bold" textLength="71.30" lengthAdjust="spacingAndGlyphs" >Alle expandieren</text>
<text x="289.8" y="459.9" font-family="Liberation Sans" font-size="7.4" fill="#111" stroke="#111" stroke-width="0.12" font-weight="bold" textLength="62.50" lengthAdjust="spacingAndGlyphs" >Alle verbergen</text>
<rect x="35.2" y="469.5" width="329.4" height="22" fill="#d4e3f3" />
<text x="43.7" y="484.9" font-family="Liberation Sans" font-size="11.6" fill="#111" stroke="#111" stroke-width="0.12" font-weight="bold" textLength="78.50" lengthAdjust="spacingAndGlyphs" >Deutschland:</text>
<text x="131.4" y="484.9" font-family="Liberation Sans" font-size="9.4" fill="#222" stroke="#222" stroke-width="0.12" textLength="65.60" lengthAdjust="spacingAndGlyphs" >2 Pf. Posthorn</text>
<text x="312.2" y="482.9" font-family="Liberation Sans" font-size="9.3" fill="#111" stroke="#111" stroke-width="0.12" font-weight="bold" textLength="34.00" lengthAdjust="spacingAndGlyphs" >Details</text>
<rect x="35.2" y="496" width="329.4" height="22" fill="#d4e3f3" />
<text x="43.7" y="511.4" font-family="Liberation Sans" font-size="11.6" fill="#111" stroke="#111" stroke-width="0.12" font-weight="bold" textLength="78.50" lengthAdjust="spacingAndGlyphs" >Deutschland:</text>
<text x="131.4" y="511.4" font-family="Liberation Sans" font-size="9.4" fill="#222" stroke="#222" stroke-width="0.12" textLength="65.60" lengthAdjust="spacingAndGlyphs" >4 Pf. Posthorn</text>
<text x="312.2" y="509.4" font-family="Liberation Sans" font-size="9.3" fill="#111" stroke="#111" stroke-width="0.12" font-weight="bold" textLength="34.00" lengthAdjust="spacingAndGlyphs" >Details</text>
<rect x="35.2" y="522.1" width="329.4" height="22" fill="#d4e3f3" />
<text x="43.7" y="537.5" font-family="Liberation Sans" font-size="11.6" fill="#111" stroke="#111" stroke-width="0.12" font-weight="bold" textLength="78.50" lengthAdjust="spacingAndGlyphs" >Deutschland:</text>
<text x="131.4" y="537.5" font-family="Liberation Sans" font-size="9.4" fill="#222" stroke="#222" stroke-width="0.12" textLength="65.60" lengthAdjust="spacingAndGlyphs" >5 Pf. Posthorn</text>
<text x="312.2" y="535.5" font-family="Liberation Sans" font-size="9.3" fill="#111" stroke="#111" stroke-width="0.12" font-weight="bold" textLength="34.00" lengthAdjust="spacingAndGlyphs" >Details</text>
<rect x="35.2" y="548.7" width="329.4" height="3.3" fill="#d4e3f3" />
<rect x="371" y="442" width="12" height="110" fill="#efefef" />
<path d="M374.5,450.5 L377,447.8 L379.5,450.5 Z" fill="#333"/>
<rect x="372" y="455.5" width="10.5" height="39.3" fill="url(#gThumbV)" stroke="#a9a9a9" stroke-width="0.8" rx="2" />
<g stroke="#777" stroke-width="0.7"><line x1="375" y1="473.2" x2="379.5" y2="473.2"/><line x1="375" y1="475.0" x2="379.5" y2="475.0"/><line x1="375" y1="476.8" x2="379.5" y2="476.8"/></g>
<path d="M374.5,543.5 L379.5,543.5 L377,546.2 Z" fill="#333"/>
<text x="23.6" y="574" font-family="Liberation Sans" font-size="9.2" fill="#111" stroke="#111" stroke-width="0.12" textLength="301.40" lengthAdjust="spacingAndGlyphs" >Hier sehen Sie das Ergebnis der statistischen Auswertung in grafischer Form.</text>
<rect x="397.5" y="75.5" width="327" height="13" fill="#dcdcdc" stroke="#c6c6c6" stroke-width="1" />
<text x="398.5" y="85.7" font-family="Liberation Sans" font-size="9.2" fill="#111" stroke="#111" stroke-width="0.12" font-weight="bold" textLength="36.50" lengthAdjust="spacingAndGlyphs" >Statistik</text>
<path d="M715.3,79.8 L720.8,85.3 M720.8,79.8 L715.3,85.3" stroke="#111" stroke-width="1.5"/>
<text x="396.8" y="103.7" font-family="Liberation Sans" font-size="8.6" fill="#222" stroke="#222" stroke-width="0.12" textLength="163.20" lengthAdjust="spacingAndGlyphs" >Welches Eingabefeld soll untersucht werden?</text>
<rect x="397.5" y="110.5" width="326.5" height="13.8" fill="url(#gBtn)" stroke="#8a8a8a" stroke-width="1" rx="2" />
<circle cx="405.8" cy="117.3" r="4.6" fill="#4a90d9"/><path d="M405.8,117.3 L405.8,112.7 A4.6,4.6 0 0 0 401.3,118.2 Z" fill="#63b95a"/><path d="M405.8,117.3 L401.3,118.2 A4.6,4.6 0 0 0 405,121.8 Z" fill="#e05050"/>
<text x="413.3" y="120.4" font-family="Liberation Sans" font-size="9.4" fill="#111" stroke="#111" stroke-width="0.12" font-weight="bold" textLength="65.00" lengthAdjust="spacingAndGlyphs" >Erhaltungsgrad</text>
<path d="M715.2,115.8 L720.3,115.8 L717.75,118.7 Z" fill="#111"/>
<rect x="397.5" y="129.5" width="326.5" height="134" fill="#ffffff" stroke="#9a9ea5" stroke-width="1" />
<rect x="398" y="130" width="325.5" height="16" fill="url(#gHdr)" />
<line x1="398" y1="146" x2="723.5" y2="146" stroke="#e2e2e2" stroke-width="1" />
<line x1="496" y1="131" x2="496" y2="145.5" stroke="#e5e5e5" stroke-width="1" />
<line x1="716.5" y1="131" x2="716.5" y2="145.5" stroke="#e5e5e5" stroke-width="1" />
<text x="401.4" y="141.5" font-family="Liberation Sans" font-size="9" fill="#111" stroke="#111" stroke-width="0.12" textLength="22.00" lengthAdjust="spacingAndGlyphs" >Detail</text>
<text x="713" y="141.5" font-family="Liberation Sans" font-size="9" fill="#111" stroke="#111" stroke-width="0.12" text-anchor="end" textLength="47.00" lengthAdjust="spacingAndGlyphs" >Auswertung</text>
<text x="400.5" y="158.8" font-family="Liberation Sans" font-size="9.8" fill="#111" stroke="#111" stroke-width="0.12" textLength="46.85" lengthAdjust="spacingAndGlyphs" >Ausgewählt</text>
<text x="715" y="158.8" font-family="Liberation Sans" font-size="9.8" fill="#111" stroke="#111" stroke-width="0.12" text-anchor="end" textLength="43.83" lengthAdjust="spacingAndGlyphs" >21 Objekte</text>
<rect x="398" y="163.01000000000002" width="325.5" height="16.71" fill="#f3f3f3" />
<text x="400.5" y="175.51000000000002" font-family="Liberation Sans" font-size="9.8" fill="#111" stroke="#111" stroke-width="0.12" textLength="50.37" lengthAdjust="spacingAndGlyphs" >Ausgewertet</text>
<text x="715" y="175.51000000000002" font-family="Liberation Sans" font-size="9.8" fill="#111" stroke="#111" stroke-width="0.12" text-anchor="end" textLength="43.83" lengthAdjust="spacingAndGlyphs" >21 Objekte</text>
<text x="400.5" y="192.22000000000003" font-family="Liberation Sans" font-size="9.8" fill="#111" stroke="#111" stroke-width="0.12" textLength="61.97" lengthAdjust="spacingAndGlyphs" >Luxuserhaltung</text>
<text x="715" y="192.22000000000003" font-family="Liberation Sans" font-size="9.8" fill="#111" stroke="#111" stroke-width="0.12" text-anchor="end" textLength="30.22" lengthAdjust="spacingAndGlyphs" >8 Stück</text>
<rect x="398" y="196.43" width="325.5" height="16.71" fill="#f3f3f3" />
<text x="400.5" y="208.93" font-family="Liberation Sans" font-size="9.8" fill="#111" stroke="#111" stroke-width="0.12" textLength="71.04" lengthAdjust="spacingAndGlyphs" >Kabinetterhaltung</text>
<text x="715" y="208.93" font-family="Liberation Sans" font-size="9.8" fill="#111" stroke="#111" stroke-width="0.12" text-anchor="end" textLength="30.22" lengthAdjust="spacingAndGlyphs" >6 Stück</text>
<text x="400.5" y="225.64000000000001" font-family="Liberation Sans" font-size="9.8" fill="#111" stroke="#111" stroke-width="0.12" textLength="63.98" lengthAdjust="spacingAndGlyphs" >Prachterhaltung</text>
<text x="715" y="225.64000000000001" font-family="Liberation Sans" font-size="9.8" fill="#111" stroke="#111" stroke-width="0.12" text-anchor="end" textLength="30.22" lengthAdjust="spacingAndGlyphs" >4 Stück</text>
<rect x="398" y="229.85000000000002" width="325.5" height="16.71" fill="#f3f3f3" />
<text x="400.5" y="242.35000000000002" font-family="Liberation Sans" font-size="9.8" fill="#111" stroke="#111" stroke-width="0.12" textLength="92.68" lengthAdjust="spacingAndGlyphs" >Durchschnittserhaltung</text>
<text x="715" y="242.35000000000002" font-family="Liberation Sans" font-size="9.8" fill="#111" stroke="#111" stroke-width="0.12" text-anchor="end" textLength="30.22" lengthAdjust="spacingAndGlyphs" >2 Stück</text>
<text x="400.5" y="259.06" font-family="Liberation Sans" font-size="9.8" fill="#111" stroke="#111" stroke-width="0.12" textLength="17.63" lengthAdjust="spacingAndGlyphs" >Fein</text>
<text x="715" y="259.06" font-family="Liberation Sans" font-size="9.8" fill="#111" stroke="#111" stroke-width="0.12" text-anchor="end" textLength="30.22" lengthAdjust="spacingAndGlyphs" >1 Stück</text>
<rect x="398" y="268" width="326" height="279" fill="#ffffff" stroke="#8a8a8a" stroke-width="1.5" />
<rect x="398.5" y="546.5" width="41" height="14" fill="url(#gTab)" stroke="#8d9096" stroke-width="1" />
<rect x="440.5" y="546.5" width="50" height="14" fill="url(#gTab)" stroke="#8d9096" stroke-width="1" />
<rect x="491" y="546.5" width="47.5" height="15.5" fill="#ffffff" stroke="#8d9096" stroke-width="1" rx="1" />
<line x1="398" y1="546.6" x2="724" y2="546.6" stroke="#8a8a8a" stroke-width="1.2" />
<text x="405.5" y="557.7" font-family="Liberation Sans" font-size="9" fill="#111" stroke="#111" stroke-width="0.12" textLength="25.70" lengthAdjust="spacingAndGlyphs" >Verlauf</text>
<text x="448.4" y="557.7" font-family="Liberation Sans" font-size="9" fill="#111" stroke="#111" stroke-width="0.12" textLength="34.60" lengthAdjust="spacingAndGlyphs" >Übersicht</text>
<text x="500.7" y="557.7" font-family="Liberation Sans" font-size="9" fill="#111" stroke="#111" stroke-width="0.12" textLength="28.60" lengthAdjust="spacingAndGlyphs" >Statistik</text>
<rect x="721" y="566" width="1.2" height="1.2" fill="#a0a0a0" />
<rect x="721" y="569" width="1.2" height="1.2" fill="#a0a0a0" />
<rect x="718" y="569" width="1.2" height="1.2" fill="#a0a0a0" />
<rect x="721" y="572" width="1.2" height="1.2" fill="#a0a0a0" />
<rect x="718" y="572" width="1.2" height="1.2" fill="#a0a0a0" />
<rect x="715" y="572" width="1.2" height="1.2" fill="#a0a0a0" />
<path d="M558.7,409.79999999999995 L647.40,409.80 A88.7,88.7 0 0 0 591.09,327.23 Z" fill="#624f2c" opacity="0.55"/>
<path d="M558.7,409.79999999999995 L591.09,327.23 A88.7,88.7 0 0 0 538.97,323.32 Z" fill="#4b4143" opacity="0.55"/>
<path d="M558.7,409.79999999999995 L538.97,323.32 A88.7,88.7 0 0 0 478.78,448.27 Z" fill="#4a3b56" opacity="0.55"/>
<path d="M558.7,409.79999999999995 L478.78,448.27 A88.7,88.7 0 0 0 493.66,470.11 Z" fill="#684022" opacity="0.55"/>
<path d="M558.7,409.79999999999995 L493.66,470.11 A88.7,88.7 0 0 0 647.40,409.80 Z" fill="#714b23" opacity="0.55"/>
<path d="M561.1,407.4 L649.80,407.40 A88.7,88.7 0 0 0 593.49,324.83 Z" fill="#dbb062" stroke="#333" stroke-width="0.6" stroke-linejoin="round"/>
<path d="M561.1,407.4 L593.49,324.83 A88.7,88.7 0 0 0 541.37,320.92 Z" fill="#a89195" stroke="#333" stroke-width="0.6" stroke-linejoin="round"/>
<path d="M561.1,407.4 L541.37,320.92 A88.7,88.7 0 0 0 481.18,445.87 Z" fill="#a585c1" stroke="#333" stroke-width="0.6" stroke-linejoin="round"/>
<path d="M561.1,407.4 L481.18,445.87 A88.7,88.7 0 0 0 496.06,467.71 Z" fill="#e98f4c" stroke="#333" stroke-width="0.6" stroke-linejoin="round"/>
<path d="M561.1,407.4 L496.06,467.71 A88.7,88.7 0 0 0 649.80,407.40 Z" fill="#fca84e" stroke="#333" stroke-width="0.6" stroke-linejoin="round"/>
<text x="468.9" y="291.6" font-family="Liberation Sans" font-size="9.9" fill="#1a1a1a" stroke="#1a1a1a" stroke-width="0.05" textLength="184.90" lengthAdjust="spacingAndGlyphs" >Prozentuale-Verteilung (Erhaltungsgrad)</text>
<text x="567.5" y="311.8" font-family="Liberation Sans" font-size="8.9" fill="#1a1a1a" stroke="#1a1a1a" stroke-width="0.05" textLength="90.90" lengthAdjust="spacingAndGlyphs" >Durchschnittserhaltung</text>
<text x="640.5" y="354.5" font-family="Liberation Sans" font-size="8.9" fill="#1a1a1a" stroke="#1a1a1a" stroke-width="0.05" textLength="61.90" lengthAdjust="spacingAndGlyphs" >Prachterhaltung</text>
<text x="403.2" y="366.8" font-family="Liberation Sans" font-size="8.9" fill="#1a1a1a" stroke="#1a1a1a" stroke-width="0.05" textLength="69.40" lengthAdjust="spacingAndGlyphs" >Kabinetterhaltung</text>
<text x="464.9" y="464.6" font-family="Liberation Sans" font-size="8.9" fill="#1a1a1a" stroke="#1a1a1a" stroke-width="0.05" textLength="15.60" lengthAdjust="spacingAndGlyphs" >Fein</text>
<text x="595.6" y="499.5" font-family="Liberation Sans" font-size="8.9" fill="#1a1a1a" stroke="#1a1a1a" stroke-width="0.05" textLength="59.60" lengthAdjust="spacingAndGlyphs" >Luxuserhaltung</text>
<text x="553.4" y="357.2" font-family="Liberation Sans" font-size="8.9" fill="#1a1a1a" stroke="#1a1a1a" stroke-width="0.05" textLength="23.30" lengthAdjust="spacingAndGlyphs" >9.52%</text>
<text x="590.5" y="380.2" font-family="Liberation Sans" font-size="8.9" fill="#1a1a1a" stroke="#1a1a1a" stroke-width="0.05" textLength="28.00" lengthAdjust="spacingAndGlyphs" >19.05%</text>
<text x="498.2" y="386.8" font-family="Liberation Sans" font-size="8.9" fill="#1a1a1a" stroke="#1a1a1a" stroke-width="0.05" textLength="28.50" lengthAdjust="spacingAndGlyphs" >28.57%</text>
<text x="504.8" y="439.9" font-family="Liberation Sans" font-size="8.9" fill="#1a1a1a" stroke="#1a1a1a" stroke-width="0.05" textLength="23.40" lengthAdjust="spacingAndGlyphs" >4.76%</text>
<text x="566.2" y="459.8" font-family="Liberation Sans" font-size="8.9" fill="#1a1a1a" stroke="#1a1a1a" stroke-width="0.05" textLength="28.20" lengthAdjust="spacingAndGlyphs" >38.10%</text>
<circle cx="28" cy="599.2" r="8.6" fill="#000" opacity="0.2" filter="url(#blur05)"/>
<circle cx="28" cy="598.7" r="8" fill="#fff"/>
<circle cx="28" cy="598.7" r="6.9" fill="#3a3a3c"/>
<circle cx="88.2" cy="599.2" r="8.6" fill="#000" opacity="0.2" filter="url(#blur05)"/>
<circle cx="88.2" cy="598.7" r="8" fill="#fff"/>
<circle cx="88.2" cy="598.7" r="6.9" fill="#3a3a3c"/>
<path d="M31,598.7 L25.2,598.7 M27.6,596.2 L25.1,598.7 L27.6,601.2" fill="none" stroke="#fff" stroke-width="1.5"/>
<path d="M85.2,598.7 L91,598.7 M88.6,596.2 L91.1,598.7 L88.6,601.2" fill="none" stroke="#fff" stroke-width="1.5"/>
<text x="44.5" y="607.4" font-family="Liberation Sans" font-size="14" fill="#555" stroke="#555" stroke-width="0" >4/10</text>
<text x="110.6" y="607.8" font-family="Liberation Sans" font-size="14" fill="#555" stroke="#555" stroke-width="0" textLength="582.80" lengthAdjust="spacingAndGlyphs" >Über hundert ausgefeilte Statistiken verfügbar! So gewinnen Sie komplett neue Erkenntnisse</text>
<text x="21" y="629.2" font-family="Liberation Sans" font-size="14" fill="#555" stroke="#555" stroke-width="0" textLength="128.80" lengthAdjust="spacingAndGlyphs" >über Ihre Sammlung.</text>
</svg>
</body></html>
